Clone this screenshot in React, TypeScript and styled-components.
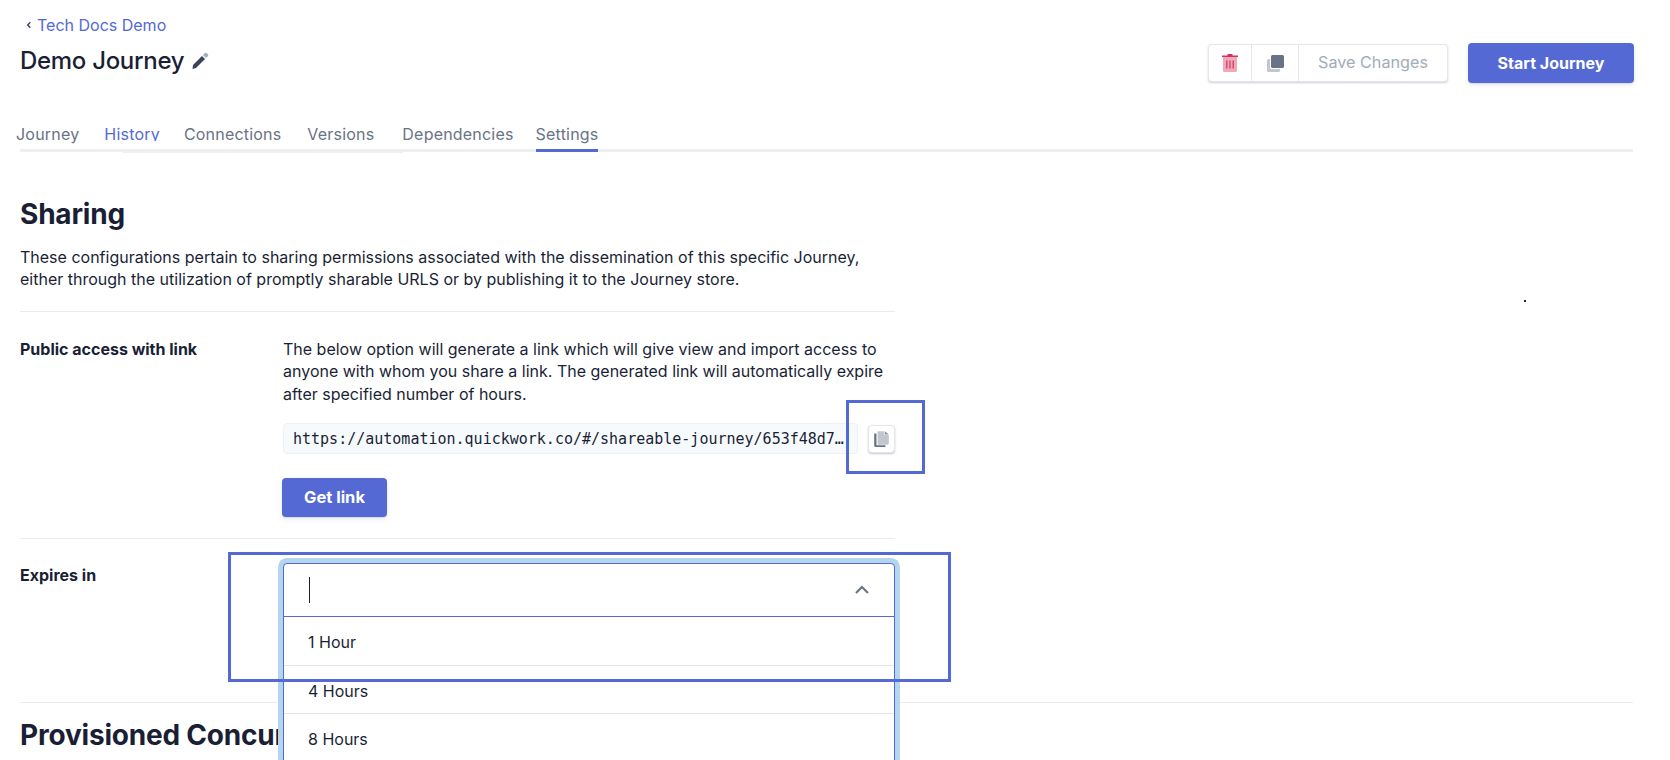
import React from "react";
import styled, { createGlobalStyle } from "styled-components";

const Global = createGlobalStyle`
  html, body { margin: 0; padding: 0; background: #fff; }
  body { font-family: "Inter", "Open Sans", sans-serif; color: #1a1f36; height: 760px; overflow: hidden; }
`;
const Page = styled.div`
  position: relative; width: 1670px; height: 760px; overflow: hidden; box-sizing: border-box;
  padding: 16px 37px 0 20px;
`;
const Head = styled.header`display: flex; justify-content: space-between; align-items: flex-start; height: 96px; margin-right: -1px;`;
const HeadLeft = styled.div`display: flex; flex-direction: column;`;
const Back = styled.a`display: flex; align-items: center; gap: 4px; padding-left: 5px; font-size: 16px; line-height: 18px; color: #5469d4;`;
const Title = styled.h1`display: flex; align-items: center; gap: 6px; margin: 11px 0 0; font-size: 24px; line-height: 32px; font-weight: 500; letter-spacing: -.3px; color: #1a1f36;`;
const Actions = styled.div`display: flex; align-items: center; gap: 20px; margin-top: 27px;`;
const Group = styled.div`display: flex; height: 38px; box-sizing: border-box; width: 240px; background: #fff; border-radius: 4px; border: 1px solid #e3e8ee; box-shadow: 0 1px 2px rgba(60,66,87,.25);`;
const IconCell = styled.div<{ $w: number }>`display: flex; align-items: center; justify-content: center; width: ${p => p.$w}px; border-right: 1px solid #e3e8ee;`;
const Save = styled.div`flex: 1; display: flex; align-items: center; justify-content: center; padding-bottom: 2px; font-size: 16.2px; color: #a3acb9;`;
const Primary = styled.button<{ $w: number; $h: number; $fs: number }>`
  width: ${p => p.$w}px; height: ${p => p.$h}px; border: 0; border-radius: 4px; background: #5469d4; color: #fff;
  font-family: inherit; font-weight: 700; font-size: ${p => p.$fs}px; padding: 0;
  box-shadow: 0 2px 5px rgba(60,66,87,.12), 0 1px 1px rgba(0,0,0,.08);
`;
const Tabs = styled.nav`display: flex; height: 40px; margin-left: -4px; box-sizing: border-box; position: relative;`;
const TabRule = styled.div`
  position: relative; height: 3px; background: #eeeff1; margin-top: -3px;
  &::after { content: ""; position: absolute; left: 103px; top: 1px; width: 280px; height: 3px; background: #eeeff1; }
`;
const Tab = styled.div<{ $left: number; $on?: boolean; $link?: boolean }>`
  margin-left: ${p => p.$left}px; height: 40px; box-sizing: border-box; padding-top: 10px; font-size: 16px; line-height: 24px; letter-spacing: .2px;
  color: ${p => p.$link ? "#5469d4" : "#697386"}; position: relative; z-index: 1;
  border-bottom: 3px solid ${p => p.$on ? "#5469d4" : "transparent"};
`;
const ClippedLabel = styled.span`display: block; height: 19px; overflow: hidden;`;
const Section = styled.section`width: 875px;`;
const H2 = styled.h2<{ $top: number }>`margin: ${p => p.$top}px 0 0; font-size: 28px; line-height: 38px; font-weight: 700; letter-spacing: -.2px; color: #1a1f36;`;
const Lead = styled.p`margin: 13px 0 21px; font-size: 16px; line-height: 22px; color: #1a1f36;`;
const Divider = styled.hr`border: 0; height: 1px; background: #e9ebee; margin: 0;`;
const FormRow = styled.div<{ $pad: string; $h?: number }>`
  display: grid; grid-template-columns: 263px 1fr; box-sizing: border-box; padding: ${p => p.$pad};
  ${p => p.$h ? `height: ${p.$h}px;` : ""}
`;
const Label = styled.div`font-size: 16px; font-weight: 700; line-height: 22px; color: #1a1f36;`;
const Desc = styled.p`margin: 0; font-size: 16px; line-height: 22.4px; color: #1a1f36;`;
const CopyRow = styled.div`display: flex; align-items: center; gap: 10px; margin-top: 18px;`;
const Code = styled.div`
  width: 575px; height: 31px; box-sizing: border-box; padding: 1px 8px 0 9px; display: flex; align-items: center;
  background: #f7fafc; border: 1px solid #eef1f5; border-radius: 4px;
  font-family: "DejaVu Sans Mono", monospace; font-size: 15px; color: #1a1f36; white-space: nowrap; overflow: hidden;
`;
const Url = styled.span`overflow: hidden; text-overflow: ellipsis; width: 552px;`;
const CopyBtn = styled.div`
  width: 27px; height: 28px; box-sizing: border-box; display: flex; align-items: center; justify-content: center; background: #fff;
  border: 1px solid #e3e8ee; border-radius: 4px; box-shadow: 0 1px 2px rgba(60,66,87,.3);
`;
const GetLink = styled(Primary)`display: block; margin: 24px 0 0 -1px; padding-bottom: 2px;`;
const Callout = styled.div<{ $x: number; $y: number; $w: number; $h: number }>`
  position: absolute; left: ${p => p.$x}px; top: ${p => p.$y}px; width: ${p => p.$w}px; height: ${p => p.$h}px;
  box-sizing: border-box; border: 3px solid #5469d4; z-index: 5; pointer-events: none;
`;
const Select = styled.div`
  position: absolute; left: 283px; top: 563px; width: 612px; box-sizing: border-box; background: #fff; z-index: 3;
  border: 1px solid #5469d4; border-radius: 4px 4px 0 0; box-shadow: 0 0 0 5px #b4d5ee; height: 260px;
`;
const Control = styled.div`display: flex; align-items: center; justify-content: space-between; height: 52px; padding: 0 23px 0 25px; border-bottom: 1px solid #5469d4;`;
const Caret = styled.span`width: 1px; height: 26px; background: #1a1f36;`;
const Option = styled.div`
  height: 45px; padding: 2px 0 0 24px; display: flex; align-items: center; font-size: 16px; color: #1a1f36; border-bottom: 1px solid #dde5ee;
  ${Control} + & { height: 46px; }
`;
const Dot = styled.span`position: absolute; left: 1524px; top: 300px; width: 2px; height: 2px; background: #222;`;

const Pencil = () => (
  <svg width="20" height="20" viewBox="0 0 20 20"><path d="M3 14 L12 5 L15 8 L6 17 L2.5 18 Z" fill="#3c4257"/><path d="M13 4 L15 2 Q16 1.5 17 2.5 L18 3.5 Q18.5 4.5 18 5 L16 7 Z" fill="#a3acb9"/></svg>
);
const Trash = () => (
  <svg width="18" height="20" viewBox="0 0 18 20"><path d="M2 4h14v13.5a1.5 1.5 0 0 1-1.5 1.5h-11A1.5 1.5 0 0 1 2 17.5Z" fill="#efa9bb"/><path d="M1 2.5h5.5V1h5v1.500h5.500V4H1Z" fill="#d3315f"/><path d="M5.800 7.500v8M9 7.500v8M12.200 7.500v8" stroke="#d3315f" strokeWidth="1.200"/></svg>
);
const Dup = () => (
  <svg width="19" height="19" viewBox="0 0 19 19"><path d="M1 6.500a1.500 1.500 0 0 1 1.500-1.500H4v8.500A1.500 1.500 0 0 0 5.500 15H14v1.500a1.500 1.500 0 0 1-1.500 1.500h-10A1.500 1.500 0 0 1 1 16.500Z" fill="#c1c6d0"/><rect x="5" y="1" width="13" height="13" rx="1.500" fill="#697386"/></svg>
);
const Copy = () => (
  <svg width="17" height="18" viewBox="0 0 15 16"><path d="M1 3h2v10.500h8V15H2a1 1 0 0 1-1-1Z" fill="#697386"/><path d="M4 1h6v3.500h4V12a1 1 0 0 1-1 1H4Z" fill="#c1c6d0"/><path d="M10.500 1L14 4h-3.500Z" fill="#8792a2"/></svg>
);
const Chevron = ({ size, w, color }: { size: number; w: number; color: string }) => (
  <svg width={size} height={size} viewBox="0 0 12 12"><path d="M2 8l4-4 4 4" fill="none" stroke={color} strokeWidth={w} /></svg>
);
const BackChevron = styled.span`display:inline-flex; transform: rotate(-90deg);`;

export default function App() {
  return (
    <Page>
      <Global />
      <Head>
        <HeadLeft>
          <Back><BackChevron><Chevron size={8} w={2} color="#3c4257" /></BackChevron>Tech Docs Demo</Back>
          <Title>Demo Journey <Pencil /></Title>
        </HeadLeft>
        <Actions>
          <Group>
            <IconCell $w={42}><Trash /></IconCell>
            <IconCell $w={46}><Dup /></IconCell>
            <Save>Save Changes</Save>
          </Group>
          <Primary $w={166} $h={40} $fs={16}>Start Journey</Primary>
        </Actions>
      </Head>
      <Tabs>
        <Tab $left={0}>Journey</Tab>
        <Tab $left={25} $link><ClippedLabel>History</ClippedLabel></Tab>
        <Tab $left={24}>Connections</Tab>
        <Tab $left={26}>Versions</Tab>
        <Tab $left={28}>Dependencies</Tab>
        <Tab $left={22} $on>Settings</Tab>
      </Tabs>
      <TabRule />
      <Section>
        <H2 $top={43}>Sharing</H2>
        <Lead>These configurations pertain to sharing permissions associated with the dissemination of this specific Journey,<br />either through the utilization of promptly sharable URLS or by publishing it to the Journey store.</Lead>
        <Divider />
        <FormRow $pad="26px 0 21px">
          <Label>Public access with link</Label>
          <div>
            <Desc>The below option will generate a link which will give view and import access to<br />anyone with whom you share a link. The generated link will automatically expire<br />after specified number of hours.</Desc>
            <CopyRow>
              <Code><Url>https://automation.quickwork.co/#/shareable-journey/653f48d7e1a94b20</Url></Code>
              <CopyBtn><Copy /></CopyBtn>
            </CopyRow>
            <GetLink $w={105} $h={39} $fs={16.5}>Get link</GetLink>
          </div>
        </FormRow>
        <Divider />
        <FormRow $pad="25px 0 0" $h={163}>
          <Label>Expires in</Label>
        </FormRow>
      </Section>
      <Divider />
      <H2 $top={13}>Provisioned Concurrency</H2>

      <Select>
        <Control><Caret /><Chevron size={18} w={1.400} color="#697386" /></Control>
        <Option>1 Hour</Option>
        <Option>4 Hours</Option>
        <Option>8 Hours</Option>
      </Select>
      <Callout $x={846} $y={400} $w={79} $h={74} />
      <Callout $x={228} $y={552} $w={723} $h={130} />
      <Dot />
    </Page>
  );
}
